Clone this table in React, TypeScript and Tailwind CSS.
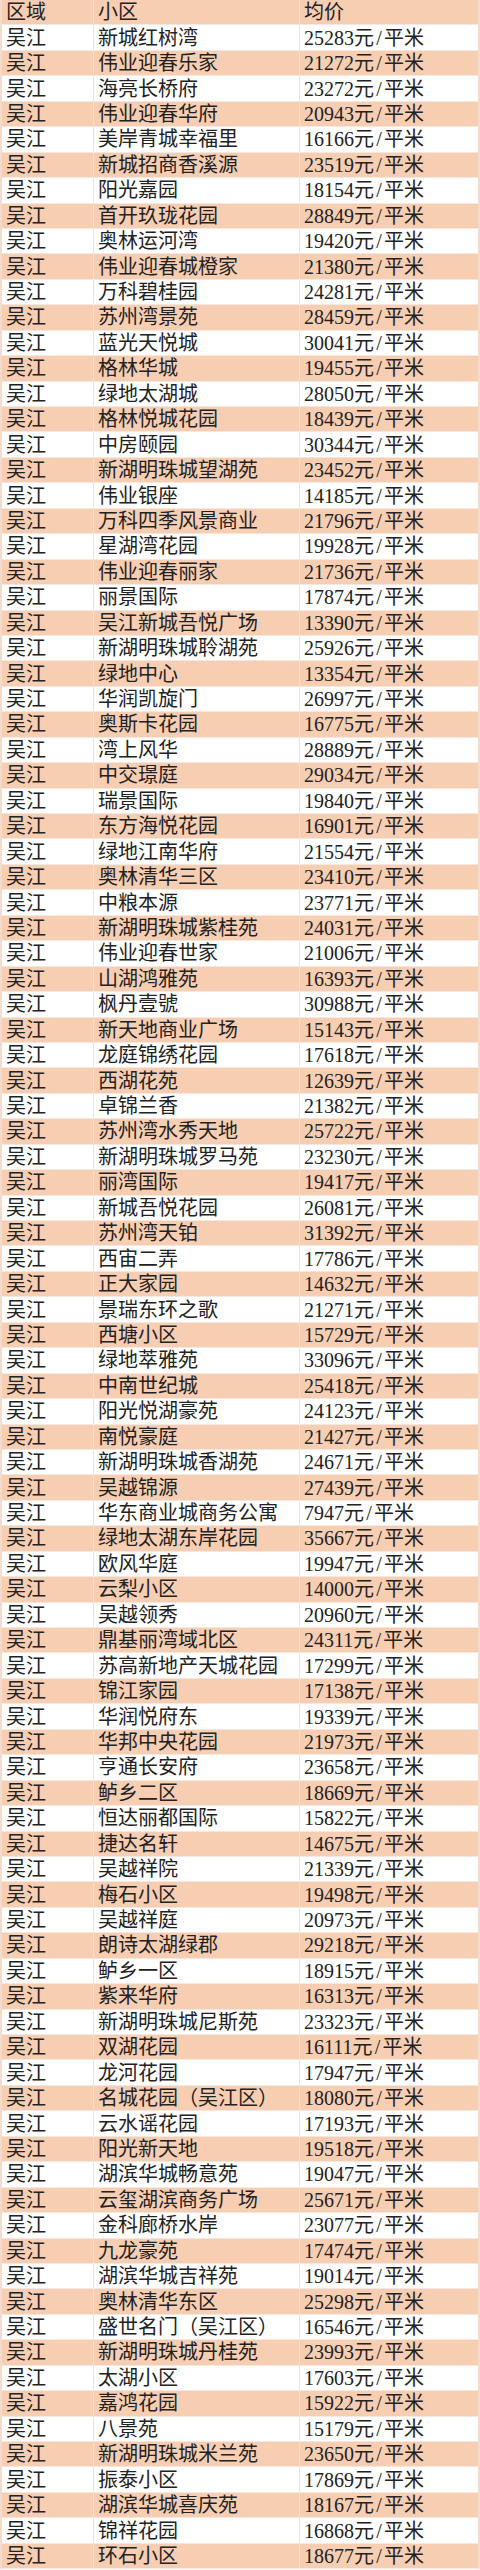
import React from "react";

const raw = `新城红树湾,25283
伟业迎春乐家,21272
海亮长桥府,23272
伟业迎春华府,20943
美岸青城幸福里,16166
新城招商香溪源,23519
阳光嘉园,18154
首开玖珑花园,28849
奥林运河湾,19420
伟业迎春城橙家,21380
万科碧桂园,24281
苏州湾景苑,28459
蓝光天悦城,30041
格林华城,19455
绿地太湖城,28050
格林悦城花园,18439
中房颐园,30344
新湖明珠城望湖苑,23452
伟业银座,14185
万科四季风景商业,21796
星湖湾花园,19928
伟业迎春丽家,21736
丽景国际,17874
吴江新城吾悦广场,13390
新湖明珠城聆湖苑,25926
绿地中心,13354
华润凯旋门,26997
奥斯卡花园,16775
湾上风华,28889
中交璟庭,29034
瑞景国际,19840
东方海悦花园,16901
绿地江南华府,21554
奥林清华三区,23410
中粮本源,23771
新湖明珠城紫桂苑,24031
伟业迎春世家,21006
山湖鸿雅苑,16393
枫丹壹號,30988
新天地商业广场,15143
龙庭锦绣花园,17618
西湖花苑,12639
卓锦兰香,21382
苏州湾水秀天地,25722
新湖明珠城罗马苑,23230
丽湾国际,19417
新城吾悦花园,26081
苏州湾天铂,31392
西宙二弄,17786
正大家园,14632
景瑞东环之歌,21271
西塘小区,15729
绿地萃雅苑,33096
中南世纪城,25418
阳光悦湖豪苑,24123
南悦豪庭,21427
新湖明珠城香湖苑,24671
吴越锦源,27439
华东商业城商务公寓,7947
绿地太湖东岸花园,35667
欧风华庭,19947
云梨小区,14000
吴越领秀,20960
鼎基丽湾域北区,24311
苏高新地产天城花园,17299
锦江家园,17138
华润悦府东,19339
华邦中央花园,21973
亨通长安府,23658
鲈乡二区,18669
恒达丽都国际,15822
捷达名轩,14675
吴越祥院,21339
梅石小区,19498
吴越祥庭,20973
朗诗太湖绿郡,29218
鲈乡一区,18915
紫来华府,16313
新湖明珠城尼斯苑,23323
双湖花园,16111
龙河花园,17947
名城花园（吴江区）,18080
云水谣花园,17193
阳光新天地,19518
湖滨华城畅意苑,19047
云玺湖滨商务广场,25671
金科廊桥水岸,23077
九龙豪苑,17474
湖滨华城吉祥苑,19014
奥林清华东区,25298
盛世名门（吴江区）,16546
新湖明珠城丹桂苑,23993
太湖小区,17603
嘉鸿花园,15922
八景苑,15179
新湖明珠城米兰苑,23650
振泰小区,17869
湖滨华城喜庆苑,18167
锦祥花园,16868
环石小区,18677`;

const rows = raw.split("\n").map((l) => {
  const [name, price] = l.split(",");
  return { name, price };
});

function Row({
  a,
  b,
  c,
  peach,
}: {
  a: string;
  b: string;
  c: React.ReactNode;
  peach: boolean;
}) {
  return (
    <div
      className={`flex h-[25.45px] items-center border-b border-[#f3e9e2] ${
        peach ? "bg-[#f8ceb3]" : "bg-white"
      }`}
    >
      <div className="flex h-full w-[92px] items-center border-r border-[#ebe3de] pl-[4px]">
        {a}
      </div>
      <div className="flex h-full w-[206px] items-center border-r border-[#ebe3de] pl-[4px]">
        {b}
      </div>
      <div className="flex h-full flex-1 items-center pl-[4px]">{c}</div>
    </div>
  );
}

function Price({ p }: { p: string }) {
  return (
    <span className="whitespace-nowrap">
      {p}元<span className="inline-block w-[10px] text-center">/</span>平米
    </span>
  );
}

export default function App() {
  return (
    <div
      className="w-[480px] overflow-hidden border-x-2 border-[#f3dccd] text-[20px] leading-none text-[#222]"
      style={{
        fontFamily: '"Liberation Serif", "Noto Sans CJK SC", serif',
      }}
    >
      <Row a="区域" b="小区" c="均价" peach={true} />
      {rows.map((r, i) => (
        <Row
          key={i}
          a="吴江"
          b={r.name}
          c={<Price p={r.price} />}
          peach={i % 2 === 1}
        />
      ))}
    </div>
  );
}
